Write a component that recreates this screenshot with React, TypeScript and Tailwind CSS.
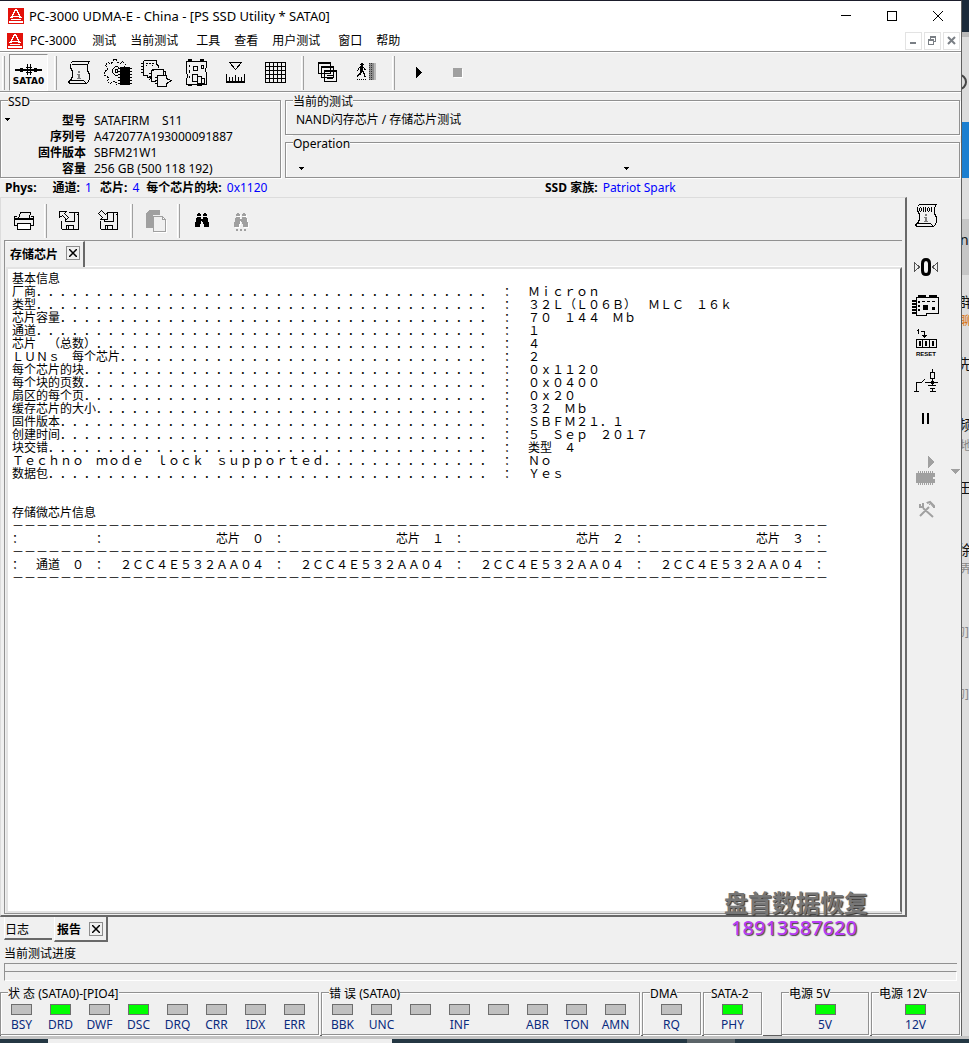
import type { ReactNode } from "react"

const REPORT_WIDTH = 40

const reportRows = [
  { name: "厂商", value: "Micron" },
  { name: "类型", value: "32L(L06B) MLC 16k" },
  { name: "芯片容量", value: "70 144 Mb" },
  { name: "通道", value: "1" },
  { name: "芯片 (总数)", value: "4" },
  { name: "LUNs 每个芯片", value: "2" },
  { name: "每个芯片的块", value: "0x1120" },
  { name: "每个块的页数", value: "0x0400" },
  { name: "扇区的每个页", value: "0x20" },
  { name: "缓存芯片的大小", value: "32 Mb" },
  { name: "固件版本", value: "SBFM21.1" },
  { name: "创建时间", value: "5 Sep 2017" },
  { name: "块交错", value: "类型 4" },
  { name: "Techno mode lock supported", value: "No" },
  { name: "数据包", value: "Yes" },
]

const chips = ["2CC4E532AA04", "2CC4E532AA04", "2CC4E532AA04", "2CC4E532AA04"]

// the report is set on a full-width grid, one character per cell
const toWide = (text: string) =>
  text.replace(/[ -~]/g, (c) => (c === " " ? "\u3000" : String.fromCharCode(c.charCodeAt(0) + 0xfee0)))

const rule = "-".repeat(68)

const reportText = toWide(
  [
    "基本信息",
    ...reportRows.map((row) => row.name.padEnd(REPORT_WIDTH, ".") + " : " + row.value),
    "",
    "",
    "存储微芯片信息",
    rule,
    ":      :" + chips.map((_, i) => ("芯片 " + i).padStart(13) + " :").join(""),
    rule,
    ": 通道 0 :" + chips.map((id) => " " + id + " :").join(""),
    rule,
  ].join("\n")
)

const menuItems = [
  { text: "PC-3000" },
  { text: "测试" },
  { text: "当前测试" },
  { text: "工具", wide: true },
  { text: "查看" },
  { text: "用户测试" },
  { text: "窗口", wide: true },
  { text: "帮助" },
]

const ssdInfo = [
  { label: "型号", value: "SATAFIRM    S11" },
  { label: "序列号", value: "A472077A193000091887" },
  { label: "固件版本", value: "SBFM21W1" },
  { label: "容量", value: "256 GB (500 118 192)" },
]

const statusLeds = [
  { name: "BSY" },
  { name: "DRD", on: true },
  { name: "DWF" },
  { name: "DSC", on: true },
  { name: "DRQ" },
  { name: "CRR" },
  { name: "IDX" },
  { name: "ERR" },
]

const errorLeds = [
  { name: "BBK" },
  { name: "UNC" },
  { name: "" },
  { name: "INF" },
  { name: "" },
  { name: "ABR" },
  { name: "TON" },
  { name: "AMN" },
]

function Icon({ children, w = 32, h = 32 }: { children: ReactNode; w?: number; h?: number }) {
  return (
    <svg
      width={w}
      height={h}
      viewBox={`0 0 ${w} ${h}`}
      fill="none"
      stroke="#000"
      strokeWidth="1"
      shapeRendering="crispEdges"
      className="shrink-0"
      aria-hidden="true"
    >
      {children}
    </svg>
  )
}

// one rect for every run of # in the rows
function Bitmap({ rows, color = "#000", x = 0, y = 0 }: { rows: string[]; color?: string; x?: number; y?: number }) {
  return (
    <g fill={color} stroke="none">
      {rows.map((row, i) =>
        [...row.matchAll(/#+/g)].map((m) => (
          <rect key={i + "-" + m.index} x={x + m.index} y={y + i} width={m[0].length} height="1" />
        ))
      )}
    </g>
  )
}

const LogoIcon = () => (
  <Icon w={16} h={16}>
    <rect width="16" height="16" fill="#e3120b" stroke="none" />
    <Bitmap
      color="#fff"
      rows={[
        "",
        "       ##",
        "      ####",
        "      #  #",
        "     ##  ##",
        "     #    #",
        "    ##    ##",
        "    #      #",
        "   ##########",
        "  ###      ###",
        "",
        "   ##########",
        "",
        " ##############",
        " ##############",
        "",
      ]}
    />
  </Icon>
)

const ScrollIcon = ({ digits = false }: { digits?: boolean }) => (
  <Icon>
    <path d="M9.5 4.5H26.5M7.5 6.5L9.5 4.5M26.5 4.5L24.5 7.5V13.5L26.5 17.5V21.5L25.5 24.5L23.5 26.5H6.5L5.5 24.5L7.5 23.5M7.5 6.5V10.5L9.5 14.5V19.5L7.5 23.5H20.5L23.5 26.5" />
    {digits ? (
      <path d="M9.5 8v3M11.5 8v3M13.5 7v5M15.5 7v5M17.5 8v3M19.5 8v3M21.5 7v5M10 7.5h1M10 11.5h1M18 7.5h1M18 11.5h1" />
    ) : (
      <path d="M9 7.5H25" />
    )}
    <Bitmap x={13} y={14} color="#808080" rows={["  ##", "  ##", "", " ###", "  ##", "  ##", "  ##", " ####"]} />
  </Icon>
)

const GearChipIcon = () => (
  <Icon>
    <path d="M11.5 2.5h3l1 3l3 1l2-2l3 3l-1 3M11.5 2.5l-1 3l-2 1l-3-1l-2 3l2 3l-1 2l-2 1v4l3 1l1 2l-1 3l3 2l3-2l3 1v2" strokeDasharray="2 1" />
    <path d="M13.5 9.5h2l2 2M13.5 9.5l-3 3v3l3 3h2M13.5 12.5h2v3h-2z" />
    <rect x="18" y="10" width="10" height="18" fill="#000" stroke="none" />
    <path d="M16 11.5H30M16 14.5H30M16 17.5H30M16 20.5H30M16 23.5H30M16 26.5H30" />
  </Icon>
)

const BoardsIcon = () => (
  <Icon w={34}>
    <path d="M3.5 3.5h13v4M3.5 3.5v15h4M1 6.5h3M1 9.5h3M1 12.5h3M1 15.5h3M6 6.5h2M9 6.5h2M12 6.5h2M6 8.5h1M12 8.5h1" />
    <path d="M16.5 3.5v4l2 1v2M14 13.5h-3v8l-2 1M18.5 12.5h5v6M11.500 12.500h7M9 16.500h3M9 19.500h3M13 24.500h3M11.500 21.500v3h3" />
    <path d="M17.500 18.500h9v3l2 1l3 1l-3 2l-2 1v3h-9zM15 20.500h3M15 23.500h3M15 26.500h3M7.500 18.500v2h3M23.500 14.500h2v4" />
  </Icon>
)

const BoardIcon = () => (
  <Icon>
    <path d="M6.5 4.5h20v6l-1 1v3l1 1v12h-20v-6l1-1v-3l-1-1z" />
    <path d="M13.500 9.500h4v4h-4zM21.500 8.500h2v3h-2zM12.500 17.500h5v7h-5zM17.500 19.500h4v7h-4zM21.500 21.500h3v5h-3z" />
    <path d="M8 3h4M20 3h4M8 28h4M17 28h5" strokeWidth="2" />
    <path d="M9.500 8v2M9.500 13v3M9.500 19v2" />
  </Icon>
)

const RulerIcon = () => (
  <Icon>
    <path d="M10.5 5.5h12l-6 7z" />
    <path d="M7.5 17v8M25.500 17v8M10.500 20v5M13.500 20v5M16.500 18v7M19.500 20v5M22.500 20v5" />
    <path strokeWidth="2" d="M7 25h19" />
  </Icon>
)

const GridIcon = () => (
  <Icon>
    <path d="M7.5 5.5h20v20h-20zM11.5 5v21M15.5 5v21M19.5 5v21M23.5 5v21M7 9.5h21M7 13.5h21M7 17.5h21M7 21.5h21" />
  </Icon>
)

const WindowsIcon = () => (
  <Icon>
    <path fill="#f0f0f0" d="M6.5 5.5h12v11h-12zM9.5 9.5h12v11h-12zM12.500 13.500h12v11h-12z" />
    <path strokeWidth="2" d="M6 6h13M9 10h13M12 14h13" />
    <path d="M15 18.500h7M15 21.500h6" />
  </Icon>
)

const ExitIcon = () => (
  <Icon>
    <Bitmap
      x={6}
      y={6}
      rows={[
        "    ##",
        "   ####",
        "    ##",
        "   ###",
        "  #####",
        " # ### #",
        " # ### ##",
        "#  ###",
        "   ####",
        "   ## #",
        "  ##  ##",
        " ###   #",
        "##     #",
        "#      ##",
        "",
        "",
        "# # # # #",
      ]}
    />
    <rect x="18" y="6" width="7" height="17" fill="#8c8c8c" stroke="none" />
    <path stroke="#333" strokeDasharray="1 1" d="M18.5 6v17M20.5 6v17" />
    <path stroke="#b8b8b8" d="M23.5 6v17M24.5 6v17" />
  </Icon>
)

const PrinterIcon = () => (
  <Icon>
    <path fill="#f0f0f0" d="M10.5 13.5l2-6h10l-1 6z" />
    <path d="M6.500 13.500h19v7h-19zM6 14.500h20M8.500 11.500h-2v2M22.500 11.500h3v2" />
    <path fill="#fff" d="M9.500 18.500h13v6h-13z" />
  </Icon>
)

const FloppyIcon = ({ out = false }: { out?: boolean }) => (
  <Icon>
    <path d="M10.5 16v7.5l1 1h16v-17h-10M14.5 14v2.500h9V8M15.500 24v-4h7v4" />
    <path d="M17.500 21v3M25.500 9h1" />
    {out ? (
      <path fill="#f0f0f0" d="M8.5 6.5h7l-2 2l4 4l-2 2l-4-4l-3 2z" />
    ) : (
      <path fill="#f0f0f0" d="M8.500 8.500l3-3l4 4l2-2v7h-7l2-2z" />
    )}
  </Icon>
)

const CopyIcon = () => (
  <Icon>
    <path fill="#a0a0a0" stroke="none" d="M6 8l3-3h11v5h-7v13H6z" />
    <path fill="#fff" stroke="#fff" d="M14.5 12.5h9l3 3v12h-12z" />
    <path fill="#f0f0f0" stroke="#a0a0a0" d="M13.5 11.5h9l3 3v12h-12zM22.5 11.5v3h3" />
  </Icon>
)

const binoculars = [
  "   ##    ##",
  "  ####  ####",
  "  ####  ####",
  "",
  "  ####  ####",
  " #####  #####",
  " ############",
  " ############",
  " ##### ######",
  "######  ######",
  "######  ######",
  "#####    #####",
  "#####    #####",
  "#####    #####",
]

const BinocularsIcon = ({ next = false }: { next?: boolean }) => (
  <Icon>
    {next && <Bitmap x={10} y={9} rows={binoculars} color="#fff" />}
    <Bitmap x={9} y={8} rows={binoculars} color={next ? "#a0a0a0" : "#000"} />
    {next && <Bitmap x={11} y={24} rows={["##  ##  ##", "##  ##  ##"]} color="#a0a0a0" />}
  </Icon>
)

const ZeroIcon = () => (
  <Icon>
    <path stroke="#555" d="M4.5 11.5v9l5-4.500z M27.500 11.500v9l-5-4.500z" />
    <path strokeWidth="3" shapeRendering="auto" d="M16 8.500c-2 0-3.500 1.500-3.500 4v7c0 2.500 1.500 4 3.500 4s3.500-1.500 3.500-4v-7c0-2.500-1.500-4-3.500-4z" />
  </Icon>
)

const CardIcon = () => (
  <Icon>
    <path d="M6.500 8.500h22v16h-12v2h-10z" />
    <path strokeWidth="3" d="M8 7.500h8M19 7.500h8" />
    <path strokeWidth="2" d="M2 12h4M2 15h4M2 18h4M2 21h4M2 24h4M8 13h2M8 17h2M8 21h2" />
    <path d="M12 12.500h3M17 12.500h3M22 12.500h3" />
    <rect x="13" y="16" width="5" height="5" fill="#000" stroke="none" />
    <rect x="22" y="18" width="3" height="3" fill="#000" stroke="none" />
  </Icon>
)

const ResetIcon = () => (
  <Icon>
    <path d="M8.500 2v5M7 3.500h1M11 4.500h3v5M12 8.500h5M13 9.500h3M14.500 8v3" />
    <path d="M6 12.500h21M6 20.500h21M6.500 12v9M12.500 12v9M19.500 12v9M26.500 12v9" />
    <path d="M9 14.500h1v4h-1zM15.500 14.500h1v4h-1zM22.500 14.500h1v4h-1z" />
    <text x="16" y="29" textAnchor="middle" stroke="none" fill="#000" className="font-['Liberation_Sans'] text-[6px] font-bold">
      RESET
    </text>
  </Icon>
)

const SwitchIcon = () => (
  <Icon>
    <path d="M4 26.500h5M6.500 26v-8.500h5M12 16.500h1M13 15.500h1M14 14.500h1M15 17.500h13M22.500 4v3M20.500 7.500h4v6h-4zM22.500 14v6M18 20.500h8M20 23.500h5M22.500 23v3M20 26.500h6" />
    <rect x="21" y="16" width="3" height="3" fill="#000" stroke="none" />
  </Icon>
)

const ChipPlayIcon = () => (
  <Icon h={36}>
    <path fill="#a0a0a0" stroke="none" d="M18 3l6 6l-6 6z" />
    <rect x="6" y="20" width="19" height="10" fill="#a0a0a0" stroke="none" />
    <path stroke="#a0a0a0" strokeWidth="2" strokeDasharray="1 1" d="M8 19h16M8 31h16" />
    <rect x="23" y="24" width="2" height="2" fill="#f0f0f0" stroke="none" />
  </Icon>
)

const ToolsIcon = () => (
  <Icon>
    <path stroke="#a0a0a0" strokeWidth="2" shapeRendering="auto" d="M10 23l9-9M13 15l10 9M10 11v3h3v-4M17 10l3-1l4 4v2" />
    <path stroke="#a0a0a0" shapeRendering="auto" d="M16.500 9.500h3l4 5M19 12l2-2" />
  </Icon>
)

const Tool = ({ label, children }: { label: string; children: ReactNode }) => (
  <button type="button" aria-label={label} className="flex h-9 w-[39px] shrink-0 items-center justify-center">
    {children}
  </button>
)

const SideTool = ({ label, children }: { label: string; children: ReactNode }) => (
  <button type="button" aria-label={label} className="flex h-[38px] w-[38px] shrink-0 items-center justify-center">
    {children}
  </button>
)

const Separator = () => <div className="h-[34px] w-[3px] shrink-0 border-r border-l border-r-[#a0a0a0] border-l-white" />

const DropArrow = ({ label }: { label: string }) => (
  <button type="button" aria-label={label} className="flex h-3 w-3 items-center justify-center">
    <Icon w={5} h={3}>
      <path fill="#000" stroke="none" d="M0 0h5v1H0zM1 1h3v1H1zM2 2h1v1H2z" />
    </Icon>
  </button>
)

const CloseBox = () => (
  <button type="button" aria-label="关闭" className="flex h-[14px] w-[14px] items-center justify-center border border-[#8c8c8c]">
    <svg width="8" height="8" viewBox="0 0 8 8" stroke="#000" strokeWidth="1.5" aria-hidden="true">
      <path d="M0 0L8 8M8 0L0 8" />
    </svg>
  </button>
)

function GroupBox({ title, className = "", children }: { title: string; className?: string; children: ReactNode }) {
  return (
    <fieldset
      className={`min-w-0 border border-[#919191] shadow-[inset_1px_1px_0_#fff,1px_1px_0_#fff] ${className}`}
    >
      <legend className="ml-[7px] h-[14px] bg-[#f0f0f0] leading-[18px] whitespace-nowrap">{title}</legend>
      {children}
    </fieldset>
  )
}

const Led = ({ name, on = false }: { name: string; on?: boolean }) => (
  <div className="flex min-w-0 flex-col items-center pt-[5px] pb-px">
    <div className={`h-[11px] w-[21px] border border-[#6e6e6e] ${on ? "bg-[#00ff00]" : "bg-[#c0c0c0]"}`} />
    <span className="mt-0.5 h-4 leading-4 text-[#0a2a7d]">{name}</span>
  </div>
)

function TitleBar() {
  return (
    <header className="bg-white">
      <div className="flex h-[29px] items-center pl-2">
        <LogoIcon />
        <h1 className="ml-[5px] flex-1 text-[13px]">PC-3000 UDMA-E - China - [PS SSD Utility * SATA0]</h1>
        <button type="button" aria-label="最小化" className="flex h-full w-[46px] items-center justify-center">
          <Icon w={10} h={10}>
            <path d="M0 4.500h10" />
          </Icon>
        </button>
        <button type="button" aria-label="最大化" className="flex h-full w-[46px] items-center justify-center">
          <Icon w={10} h={10}>
            <path d="M0.500 0.500h9v9h-9z" />
          </Icon>
        </button>
        <button type="button" aria-label="关闭" className="flex h-full w-[46px] items-center justify-center">
          <svg width="10" height="10" viewBox="0 0 10 10" stroke="#000" aria-hidden="true">
            <path d="M0 0L10 10M10 0L0 10" />
          </svg>
        </button>
      </div>
      <div className="flex h-[22px] items-center border-b border-[#919191] pl-[7px]">
        <LogoIcon />
        <nav className="flex flex-1">
          {menuItems.map((item, i) => (
            <button
              type="button"
              key={item.text}
              className={`px-[7px] whitespace-nowrap ${item.wide ? "ml-1" : ""} ${i === 0 ? "mr-0.5" : ""}`}
            >
              {item.text}
            </button>
          ))}
        </nav>
        <div className="flex gap-0.5 pr-px">
          <button type="button" aria-label="最小化子窗口" className="flex h-[18px] w-[17px] items-center justify-center border border-[#e3e3e3]">
            <Icon w={9} h={9}>
              <path stroke="#7a7f85" strokeWidth="2" d="M1 7h6" />
            </Icon>
          </button>
          <button type="button" aria-label="还原子窗口" className="flex h-[18px] w-[17px] items-center justify-center border border-[#e3e3e3]">
            <Icon w={9} h={9}>
              <path stroke="#7a7f85" d="M0.500 3.500h5v5h-5zM0 4.500h6M2.500 3V0.500h5v5H6M2 1.500h6" />
            </Icon>
          </button>
          <button type="button" aria-label="关闭子窗口" className="flex h-[18px] w-[17px] items-center justify-center border border-[#e3e3e3]">
            <svg width="9" height="9" viewBox="0 0 9 9" stroke="#7a7f85" strokeWidth="2" aria-hidden="true">
              <path d="M1 1L8 8M8 1L1 8" />
            </svg>
          </button>
        </div>
      </div>
    </header>
  )
}

function MainToolbar() {
  return (
    <div className="flex h-10 items-center border-t border-b border-t-white border-b-[#919191] pt-px pl-[2px]">
      <Separator />
      <button
        type="button"
        className="ml-1 flex h-[37px] w-[39px] shrink-0 flex-col items-center border border-t-[#919191] border-r-white border-b-white border-l-[#919191] bg-[#f8f8f8] pt-2"
      >
        <Icon w={27} h={13}>
          <path strokeWidth="2" d="M0 7h27" />
          <path d="M5 5.500h3M5 8.500h3M19 5.500h3M19 8.500h3M12.500 1v11M15.500 1v11M11 4.500h6M11 9.500h6" />
        </Icon>
        <span className="font-['DejaVu_Sans'] text-[9px] leading-[10px] font-bold">SATA0</span>
      </button>
      <div className="mr-[2px] ml-[6px]">
        <Separator />
      </div>
      <Tool label="信息">
        <ScrollIcon />
      </Tool>
      <Tool label="芯片设置">
        <GearChipIcon />
      </Tool>
      <Tool label="芯片链">
        <BoardsIcon />
      </Tool>
      <Tool label="电路板">
        <BoardIcon />
      </Tool>
      <Tool label="测量">
        <RulerIcon />
      </Tool>
      <Tool label="网格">
        <GridIcon />
      </Tool>
      <div className="mr-1 ml-2">
        <Separator />
      </div>
      <Tool label="窗口">
        <WindowsIcon />
      </Tool>
      <Tool label="退出">
        <ExitIcon />
      </Tool>
      <div className="mr-1 ml-[6px]">
        <Separator />
      </div>
      <Tool label="开始">
        <Icon w={7} h={13}>
          <path fill="#000" stroke="none" d="M1 0l6 6.500l-6 6.500z" />
        </Icon>
      </Tool>
      <Tool label="停止">
        <Icon w={10} h={10}>
          <path fill="#fff" stroke="none" d="M1 1h9v9H1z" />
          <path fill="#a0a0a0" stroke="none" d="M0 0h9v9H0z" />
        </Icon>
      </Tool>
    </div>
  )
}

function InfoPanels() {
  return (
    <div className="flex gap-1 border-t border-white pr-px">
      <GroupBox title="SSD" className="w-[281px] shrink-0">
        <div className="flex pt-[6px]">
          <DropArrow label="选择SSD" />
          <table className="ml-[9px]">
            <tbody>
              {ssdInfo.map((row) => (
                <tr key={row.label} className="h-4 leading-4">
                  <th scope="row" className="w-[64px] p-0 text-right font-bold whitespace-nowrap">
                    {row.label}
                  </th>
                  <td className="p-0 pl-2 whitespace-pre">{row.value}</td>
                </tr>
              ))}
            </tbody>
          </table>
        </div>
      </GroupBox>
      <div className="flex min-w-0 flex-1 flex-col">
        <GroupBox title="当前的测试">
          <p className="h-[27px] pt-[5px] pl-[10px] leading-4">NAND闪存芯片 / 存储芯片测试</p>
        </GroupBox>
        <GroupBox title="Operation" className="flex-1">
          <div className="grid grid-cols-[325px_1fr] pt-[13px] pl-[9px]">
            <DropArrow label="操作" />
            <DropArrow label="操作参数" />
          </div>
        </GroupBox>
      </div>
    </div>
  )
}

function ReportPanel() {
  return (
    <section className="flex min-w-0 flex-1 flex-col border-t border-r-2 border-b-2 border-l border-t-[#dcdcdc] border-r-[#696969] border-b-[#696969] border-l-[#dcdcdc] pr-[3px] pb-px pl-[3px]">
      <div className="flex h-[42px] shrink-0 items-center pt-[4px]">
        <Tool label="打印">
          <PrinterIcon />
        </Tool>
        <div className="ml-px">
          <Separator />
        </div>
        <Tool label="导出">
          <FloppyIcon out />
        </Tool>
        <Tool label="保存">
          <FloppyIcon />
        </Tool>
        <div className="mr-[3px] ml-[5px]">
          <Separator />
        </div>
        <Tool label="复制">
          <CopyIcon />
        </Tool>
        <div className="mr-0.5 ml-0.5">
          <Separator />
        </div>
        <Tool label="查找">
          <BinocularsIcon />
        </Tool>
        <Tool label="查找下一个">
          <BinocularsIcon next />
        </Tool>
      </div>
      <div className="flex flex-1 flex-col border-t border-b border-l border-[#919191] pl-px">
        <div className="flex h-[26px] shrink-0">
          <div className="flex w-[79px] shrink-0 items-center justify-between border-t border-r-2 border-t-white border-r-[#696969] pr-[3px] pb-1 pl-1">
            <span className="pt-1 font-bold">存储芯片</span>
            <CloseBox />
          </div>
          <div className="flex-1 border-b border-white" />
        </div>
        <pre className="flex-1 overflow-hidden border-t-2 border-r-2 border-b-2 border-l-2 border-t-[#e3e3e3] border-r-[#696969] border-b-[#e3e3e3] border-l-[#e3e3e3] bg-white pt-0.5 pl-1 font-['Noto_Sans_CJK_SC',monospace] text-[12px] leading-[13px] [text-spacing-trim:space-all]">
          {reportText}
        </pre>
      </div>
    </section>
  )
}

function SideToolbar() {
  return (
    <aside className="relative flex w-[54px] shrink-0 flex-col">
      <SideTool label="报告">
        <ScrollIcon digits />
      </SideTool>
      <div className="h-[13px]" />
      <SideTool label="归零">
        <ZeroIcon />
      </SideTool>
      <SideTool label="板卡">
        <CardIcon />
      </SideTool>
      <SideTool label="复位">
        <ResetIcon />
      </SideTool>
      <SideTool label="电源开关">
        <SwitchIcon />
      </SideTool>
      <SideTool label="暂停">
        <Icon w={8} h={12}>
          <path fill="#000" stroke="none" d="M0 0h2v11H0zM5 0h2v11H5z" />
        </Icon>
      </SideTool>
      <div className="mt-[14px] flex items-center">
        <SideTool label="运行芯片">
          <ChipPlayIcon />
        </SideTool>
        <button type="button" aria-label="更多" className="ml-1 flex h-3 w-3 items-center justify-center">
          <Icon w={9} h={5}>
            <path fill="#a0a0a0" stroke="none" d="M0 0h9l-4.500 5z" />
          </Icon>
        </button>
      </div>
      <SideTool label="工具">
        <ToolsIcon />
      </SideTool>
    </aside>
  )
}

function BottomTabs() {
  return (
    <div className="flex h-[26px] items-start pl-1">
      <button type="button" className="h-[23px] w-12 border-b-2 border-l border-b-[#696969] border-l-white pt-1 text-left">
        日志
      </button>
      <div className="ml-[2px] flex h-[25px] items-center justify-between border-r-2 border-b-2 border-l border-r-[#696969] border-b-[#696969] border-l-white pr-[3px] pl-[2px]">
        <span className="mr-2 pt-0.5 font-bold">报告</span>
        <CloseBox />
      </div>
    </div>
  )
}

function StatusBar() {
  return (
    <footer className="flex gap-0.5 pt-1 pr-px">
      <GroupBox title="状 态 (SATA0)-[PIO4]" className="flex-1">
        <div className="grid grid-cols-8 pr-[4px] pl-px">
          {statusLeds.map((led) => (
            <Led key={led.name} {...led} />
          ))}
        </div>
      </GroupBox>
      <GroupBox title="错 误 (SATA0)" className="flex-1">
        <div className="grid grid-cols-8 pr-[4px] pl-px">
          {errorLeds.map((led, i) => (
            <Led key={i} {...led} />
          ))}
        </div>
      </GroupBox>
      <GroupBox title="DMA" className="w-[59px]">
        <Led name="RQ" />
      </GroupBox>
      <GroupBox title="SATA-2" className="w-[59px]">
        <Led name="PHY" on />
      </GroupBox>
      <GroupBox title="电源 5V" className="ml-[17px] w-[88px]">
        <Led name="5V" on />
      </GroupBox>
      <GroupBox title="电源 12V" className="w-[89px]">
        <Led name="12V" on />
      </GroupBox>
    </footer>
  )
}

// slice of the chat window that shows from behind the right edge
function BackgroundWindow() {
  return (
    <div className="relative w-[7px] shrink-0 overflow-hidden bg-[#dedede] text-[14px] leading-5 whitespace-nowrap text-[#111]" aria-hidden="true">
      <div className="h-8 bg-[#1b2a3a]" />
      <div className="h-[90px] border-t-[5px] border-[#b9b9b9] bg-[#dcdcdc]" />
      <div className="h-14 bg-[#1c7fd0]" />
      <div className="h-[41px]" />
      <div className="h-14 bg-[#c6c6c6]" />
      <span className="absolute top-[74px] -left-[11px] h-4 w-4 rounded-full border-2 border-[#444]" />
      <span className="absolute top-[230px] -left-[2px]">no</span>
      <span className="absolute top-[292px] -left-[4px]">群</span>
      <span className="absolute top-[311px] -left-[2px] text-[12px] text-[#d9730d]">聊</span>
      <span className="absolute top-[354px] -left-[4px]">先</span>
      <span className="absolute top-[415px] -left-[4px]">频</span>
      <span className="absolute top-[436px] -left-[2px] text-[12px] text-[#888]">地</span>
      <span className="absolute top-[478px] -left-[4px]">王</span>
      <span className="absolute top-[540px] -left-[4px]">徐</span>
      <span className="absolute top-[559px] -left-[2px] text-[12px] text-[#888]">弄</span>
      <span className="absolute top-[622px] -left-[9px] text-[12px] text-[#888]">的]</span>
      <span className="absolute top-[684px] -left-[9px] text-[12px] text-[#888]">的]</span>
    </div>
  )
}

export default function App() {
  return (
    <div className="relative flex min-h-screen flex-col bg-[#c4c4c4] font-['Noto_Sans','Noto_Sans_CJK_SC',sans-serif] text-[12px] leading-4 text-black">
      <div className="flex flex-1">
        <main className="flex min-w-0 flex-1 flex-col border-t border-r border-b border-t-[#1b1d2b] border-r-[#5f5f5f] border-b-[#5f5f5f] bg-[#f0f0f0]">
          <TitleBar />
          <MainToolbar />
          <InfoPanels />
          <div className="flex h-[19px] items-center pl-[5px] whitespace-pre">
            <p className="w-[540px] font-bold">
              Phys:<span className="ml-4">通道:</span> <span className="ml-0.5 font-normal text-[#0000ff]">1</span>
              <span className="ml-2">芯片:</span> <span className="ml-0.5 font-normal text-[#0000ff]">4</span>
              <span className="ml-[7px]">每个芯片的块:</span> <span className="ml-0.5 font-normal text-[#0000ff]">0x1120</span>
            </p>
            <p className="font-bold">
              SSD 家族: <span className="ml-0.5 font-normal text-[#0000ff]">Patriot Spark</span>
            </p>
          </div>
          <div className="flex flex-1">
            <ReportPanel />
            <SideToolbar />
          </div>
          <BottomTabs />
          <div className="px-1">
            <p className="h-5 pt-[3px]">当前测试进度</p>
            <div className="h-2 border-t border-l border-[#919191]" />
            <div className="h-[10px] border border-t-[#919191] border-r-white border-b-white border-l-[#919191]" />
          </div>
          <StatusBar />
        </main>
        <BackgroundWindow />
      </div>
      <div className="flex h-[7px] border-t-3 border-[#c4c4c4] bg-[#243743]">
        <div className="ml-12 w-[344px] bg-[#efefef]" />
        <div className="ml-[295px] w-12 bg-[#5b6468]" />
      </div>
      <div className="absolute right-[101px] bottom-[104px] text-center font-bold">
        <p className="text-[24px] leading-7 text-[#777] [text-shadow:1px_1px_1px_#333]">盘首数据恢复</p>
        <p className="pr-1 text-[20px] leading-[22px] font-medium text-[#b83df5] [text-shadow:1px_1px_1px_#444]">18913587620</p>
      </div>
    </div>
  )
}
